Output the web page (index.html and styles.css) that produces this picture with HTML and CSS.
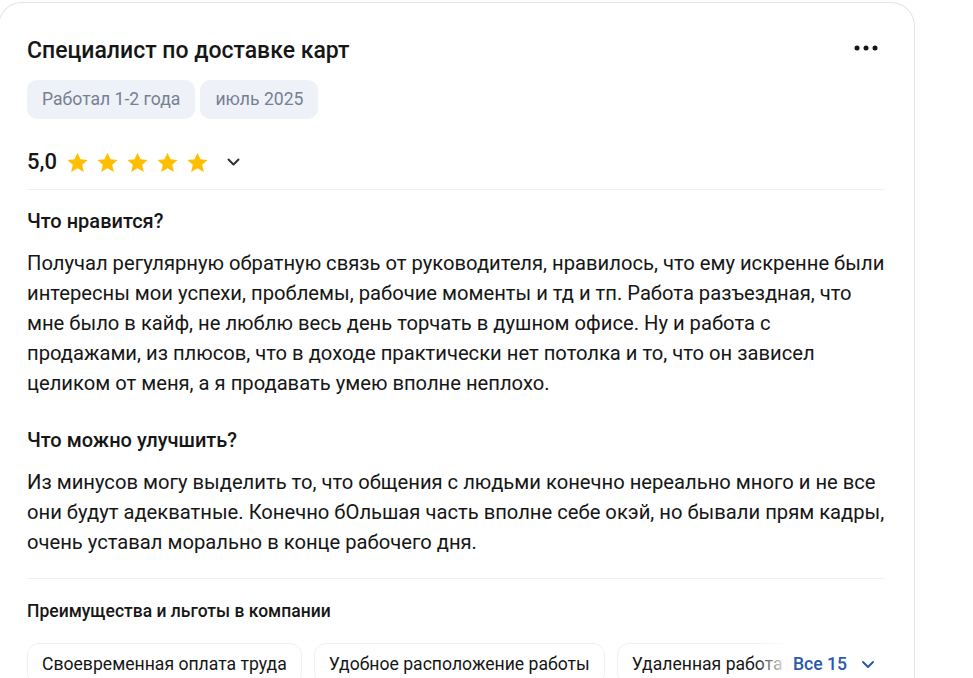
FILE: index.html
```html
<!DOCTYPE html>
<html>
    <head>
        <title>Отзыв</title>
        <link rel="stylesheet" href="styles.css">
    </head>
    <body>
        <div class="review-card">
            <div class="review-head">
                <h2 class="review-title">Специалист по доставке карт</h2>
                <button class="more-btn" aria-label="Ещё">
                    <svg width="24" height="6" viewBox="0 0 24 6"><circle cx="3" cy="3" r="2.5"/><circle cx="12" cy="3" r="2.5"/><circle cx="21" cy="3" r="2.5"/></svg>
                </button>
            </div>
            <div class="tags">
                <span class="tag">Работал 1-2 года</span>
                <span class="tag">июль 2025</span>
            </div>
            <div class="rating">
                <span class="rating-value">5,0</span>
                <span class="stars">
                    <svg class="star" viewBox="0 0 24 24"><path d="M12 1.8l3.1 6.9 7.4.7-5.6 5 1.7 7.4L12 17.9l-6.6 3.9 1.7-7.4-5.6-5 7.4-.7z"/></svg>
                    <svg class="star" viewBox="0 0 24 24"><path d="M12 1.8l3.1 6.9 7.4.7-5.6 5 1.7 7.4L12 17.9l-6.6 3.9 1.7-7.4-5.6-5 7.4-.7z"/></svg>
                    <svg class="star" viewBox="0 0 24 24"><path d="M12 1.8l3.1 6.9 7.4.7-5.6 5 1.7 7.4L12 17.9l-6.6 3.9 1.7-7.4-5.6-5 7.4-.7z"/></svg>
                    <svg class="star" viewBox="0 0 24 24"><path d="M12 1.8l3.1 6.9 7.4.7-5.6 5 1.7 7.4L12 17.9l-6.6 3.9 1.7-7.4-5.6-5 7.4-.7z"/></svg>
                    <svg class="star" viewBox="0 0 24 24"><path d="M12 1.8l3.1 6.9 7.4.7-5.6 5 1.7 7.4L12 17.9l-6.6 3.9 1.7-7.4-5.6-5 7.4-.7z"/></svg>
                </span>
                <svg class="chevron" width="13" height="8" viewBox="0 0 13 8"><path d="M1.5 1.5l5 5 5-5" fill="none" stroke="#333" stroke-width="2" stroke-linecap="round" stroke-linejoin="round"/></svg>
            </div>
            <hr class="divider">
            <h3 class="section-title">Что нравится?</h3>
            <p class="section-text">Получал регулярную обратную связь от руководителя, нравилось, что ему искренне были интересны мои успехи, проблемы, рабочие моменты и тд и тп. Работа разъездная, что мне было в кайф, не люблю весь день торчать в душном офисе. Ну и работа с продажами, из плюсов, что в доходе практически нет потолка и то, что он зависел целиком от меня, а я продавать умею вполне неплохо.</p>
            <h3 class="section-title">Что можно улучшить?</h3>
            <p class="section-text last">Из минусов могу выделить то, что общения с людьми конечно нереально много и не все они будут адекватные. Конечно бОльшая часть вполне себе окэй, но бывали прям кадры, очень уставал морально в конце рабочего дня.</p>
            <hr class="divider">
            <h4 class="perks-title">Преимущества и льготы в компании</h4>
            <div class="perks">
                <div class="perks-list">
                    <span class="perk">Своевременная оплата труда</span>
                    <span class="perk">Удобное расположение работы</span>
                    <span class="perk">Удаленная работа</span>
                </div>
                <div class="perks-more">
                    Все 15
                    <svg width="14" height="9" viewBox="0 0 14 9"><path d="M2 2l5 5 5-5" fill="none" stroke="#2b5aa8" stroke-width="2" stroke-linecap="round" stroke-linejoin="round"/></svg>
                </div>
            </div>
        </div>
    </body>
</html>
```

FILE: styles.css
```css
body {
  margin: 0;
  font-family: Roboto, "Noto Sans", sans-serif;
  color: #161616;
  background: #fff;
  overflow: hidden;
}
.review-card {
  width: 917px;
  box-sizing: border-box;
  margin: 2px 0 0 -2px;
  padding: 33px 28px 0 28px;
  border: 1px solid #dfe5ee;
  border-bottom: none;
  border-radius: 24px 24px 0 0;
  height: 700px;
}
.review-head {
  display: flex;
  align-items: center;
  justify-content: space-between;
}
.review-title {
  margin: 0;
  font-size: 23px;
  line-height: 30px;
  font-weight: 500;
}
.more-btn {
  border: none;
  background: none;
  padding: 0;
  margin: 0 8px 6px 0;
  display: flex;
  fill: #161616;
}
.tags {
  display: flex;
  gap: 5px;
  margin-top: 14px;
}
.tag {
  background: #eef1f7;
  color: #768093;
  font-size: 17.6px;
  line-height: 25px;
  padding: 7px 15px;
  border-radius: 10px;
}
.rating {
  display: flex;
  align-items: center;
  margin-top: 29px;
}
.rating-value {
  font-size: 22px;
  line-height: 28px;
  font-weight: 500;
  margin-right: 9px;
}
.stars {
  display: flex;
  gap: 7px;
}
.star {
  width: 23px;
  height: 23px;
  fill: #ffbf00;
}
.chevron {
  margin-left: 18px;
}
.divider {
  border: none;
  border-top: 1px solid #eef0f4;
  margin: 13px 2px 0 0;
}
.section-title {
  margin: 18px 0 0;
  font-size: 20px;
  line-height: 26px;
  font-weight: 500;
}
.section-text {
  margin: 14px 0 29px;
  font-size: 20.2px;
  line-height: 30px;
}
.section-text.last {
  margin-bottom: 21px;
}
.perks-title {
  margin: 21px 0 0;
  font-size: 17.5px;
  line-height: 22px;
  font-weight: 500;
}
.perks {
  display: flex;
  align-items: center;
  margin-top: 21px;
  position: relative;
}
.perks-list {
  display: flex;
  gap: 12px;
  overflow: hidden;
  flex: 1;
}
.perk {
  flex: none;
  border: 1px solid #eef0f4;
  border-radius: 12px;
  font-size: 17.6px;
  line-height: 26px;
  padding: 7px 14px;
}
.perks-more {
  position: absolute;
  right: 0;
  top: 0;
  bottom: 0;
  display: flex;
  align-items: center;
  gap: 14px;
  padding-left: 38px;
  padding-right: 11px;
  color: #2b5aa8;
  font-size: 17.6px;
  font-weight: 500;
  background: linear-gradient(to right, rgba(255,255,255,0), #fff 34px);
}
```
